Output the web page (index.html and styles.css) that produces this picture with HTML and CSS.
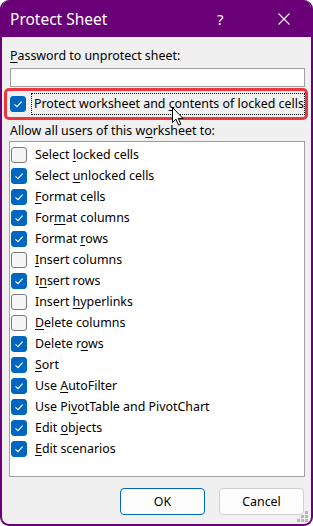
FILE: index.html
```html
<!DOCTYPE html>
<html>
<head>
<meta charset="utf-8">
<link rel="stylesheet" href="styles.css">
</head>
<body>
<div class="window">
  <div class="titlebar">
    <span class="title">Protect Sheet</span>
    <span class="help">?</span>
    <svg class="close" width="12" height="12" viewBox="0 0 12 12"><path d="M0.5 0.5 L11.5 11.5 M11.5 0.5 L0.5 11.5" stroke="#fff" stroke-width="1.1" fill="none"/></svg>
  </div>
  <div class="content">
    <div class="label pw"><u>P</u>assword to unprotect sheet:</div>
    <div class="input"></div>
    <div class="highlight">
      <span class="cb on"><svg width="16" height="16" viewBox="0 0 16 16"><path d="M4.5 8.3 L7 10.6 L11.6 5.6" stroke="#fff" stroke-width="1.1" fill="none"/></svg></span>
      <span class="focus">Protect worksheet and <u>c</u>ontents of locked cells</span>
    </div>
    <div class="label allow">Allow all users of this w<u>o</u>rksheet to:</div>
    <div class="list">
      <div class="item"><span class="cb"></span><span class="txt">Select <u>l</u>ocked cells</span></div>
      <div class="item"><span class="cb on"><svg width="16" height="16" viewBox="0 0 16 16"><path d="M4.5 8.3 L7 10.6 L11.6 5.6" stroke="#fff" stroke-width="1.1" fill="none"/></svg></span><span class="txt">Select <u>u</u>nlocked cells</span></div>
      <div class="item"><span class="cb on"><svg width="16" height="16" viewBox="0 0 16 16"><path d="M4.5 8.3 L7 10.6 L11.6 5.6" stroke="#fff" stroke-width="1.1" fill="none"/></svg></span><span class="txt"><u>F</u>ormat cells</span></div>
      <div class="item"><span class="cb on"><svg width="16" height="16" viewBox="0 0 16 16"><path d="M4.5 8.3 L7 10.6 L11.6 5.6" stroke="#fff" stroke-width="1.1" fill="none"/></svg></span><span class="txt">For<u>m</u>at columns</span></div>
      <div class="item"><span class="cb on"><svg width="16" height="16" viewBox="0 0 16 16"><path d="M4.5 8.3 L7 10.6 L11.6 5.6" stroke="#fff" stroke-width="1.1" fill="none"/></svg></span><span class="txt">Format <u>r</u>ows</span></div>
      <div class="item"><span class="cb"></span><span class="txt"><u>I</u>nsert columns</span></div>
      <div class="item"><span class="cb on"><svg width="16" height="16" viewBox="0 0 16 16"><path d="M4.5 8.3 L7 10.6 L11.6 5.6" stroke="#fff" stroke-width="1.1" fill="none"/></svg></span><span class="txt">I<u>n</u>sert rows</span></div>
      <div class="item"><span class="cb"></span><span class="txt">Insert <u>h</u>yperlinks</span></div>
      <div class="item"><span class="cb"></span><span class="txt"><u>D</u>elete columns</span></div>
      <div class="item"><span class="cb on"><svg width="16" height="16" viewBox="0 0 16 16"><path d="M4.5 8.3 L7 10.6 L11.6 5.6" stroke="#fff" stroke-width="1.1" fill="none"/></svg></span><span class="txt">Delete r<u>o</u>ws</span></div>
      <div class="item"><span class="cb on"><svg width="16" height="16" viewBox="0 0 16 16"><path d="M4.5 8.3 L7 10.6 L11.6 5.6" stroke="#fff" stroke-width="1.1" fill="none"/></svg></span><span class="txt"><u>S</u>ort</span></div>
      <div class="item"><span class="cb on"><svg width="16" height="16" viewBox="0 0 16 16"><path d="M4.5 8.3 L7 10.6 L11.6 5.6" stroke="#fff" stroke-width="1.1" fill="none"/></svg></span><span class="txt">Use <u>A</u>utoFilter</span></div>
      <div class="item"><span class="cb on"><svg width="16" height="16" viewBox="0 0 16 16"><path d="M4.5 8.3 L7 10.6 L11.6 5.6" stroke="#fff" stroke-width="1.1" fill="none"/></svg></span><span class="txt">Use Pi<u>v</u>otTable and PivotChart</span></div>
      <div class="item"><span class="cb on"><svg width="16" height="16" viewBox="0 0 16 16"><path d="M4.5 8.3 L7 10.6 L11.6 5.6" stroke="#fff" stroke-width="1.1" fill="none"/></svg></span><span class="txt">Edit <u>o</u>bjects</span></div>
      <div class="item"><span class="cb on"><svg width="16" height="16" viewBox="0 0 16 16"><path d="M4.5 8.3 L7 10.6 L11.6 5.6" stroke="#fff" stroke-width="1.1" fill="none"/></svg></span><span class="txt"><u>E</u>dit scenarios</span></div>
    </div>
    <div class="buttons">
      <div class="btn ok">OK</div>
      <div class="btn">Cancel</div>
    </div>
  </div>
  <svg class="grip" width="12" height="12" viewBox="0 0 12 12" fill="#b8b8b8">
    <rect x="8" y="0" width="3" height="3"/>
    <rect x="4" y="4" width="3" height="3"/><rect x="8" y="4" width="3" height="3"/>
    <rect x="0" y="8" width="3" height="3"/><rect x="4" y="8" width="3" height="3"/><rect x="8" y="8" width="3" height="3"/>
  </svg>
  <svg class="cursor" width="12" height="20" viewBox="0 0 12 20">
    <path d="M0.5 0.5 L0.5 15.5 L4 12.2 L6.6 18.2 L8.8 17.2 L6.3 11.4 L11 11.4 Z" fill="#fff" stroke="#000" stroke-width="1"/>
  </svg>
</div>
</body>
</html>
```

FILE: styles.css
```css
html, body {
  margin: 0;
  padding: 0;
  background: #ffffff;
}
.window {
  position: relative;
  width: 313px;
  height: 526px;
  box-sizing: border-box;
  border: 2px solid #690078;
  border-top: none;
  border-radius: 9px;
  background: #f0f0f0;
  overflow: hidden;
  font-family: "Noto Sans", sans-serif;
  font-size: 12.4px;
  color: #000;
  display: flex;
  flex-direction: column;
}
.titlebar {
  height: 37px;
  background: #690078;
  color: #fff;
  display: flex;
  align-items: center;
  margin: 0 -2px;
  padding-left: 10px;
  flex: none;
}
.title {
  font-size: 15.5px;
  flex: 1;
}
.help {
  font-size: 15px;
  width: 12px;
  margin-right: 49px;
}
.close {
  margin-right: 23px;
}
.content {
  display: flex;
  flex-direction: column;
  padding: 0 0 0 1px;
  flex: 1;
}
.label {
  line-height: 18px;
  padding-left: 7px;
  white-space: nowrap;
}
.pw {
  margin-top: 10px;
}
.input {
  margin: 3px 6px 0 7px;
  height: 17px;
  background: #fff;
  border: 1px solid #a0a0a0;
}
.highlight {
  margin: 1px 3px 0 1px;
  height: 26px;
  border: 3px solid #e8383d;
  border-radius: 5px;
  display: flex;
  align-items: center;
  padding-left: 3px;
}
.focus {
  margin-left: 6px;
  outline: 1px dotted #000;
  line-height: 20px;
  padding: 0 0 0 2px;
  flex: 1;
  margin-right: 1px;
  white-space: nowrap;
}
.allow {
  margin-top: 2px;
}
.list {
  margin: 1px 6px 0 6px;
  height: 336px;
  box-sizing: border-box;
  border: 1px solid #a0a0a0;
  background: #fff;
  padding-top: 2px;
  padding-left: 1px;
}
.item {
  height: 21px;
  display: flex;
  align-items: center;
}
.txt {
  white-space: nowrap;
}
.cb {
  width: 16px;
  height: 16px;
  box-sizing: border-box;
  border: 1px solid #7a7a7a;
  border-radius: 3px;
  background: #f5f5f5;
  margin-right: 8px;
  display: inline-flex;
  flex: none;
}
.cb.on {
  background: #0067c0;
  border-color: #0067c0;
}
.cb.on svg {
  margin: -1px;
}
.highlight .cb {
  margin-right: 0;
}
u {
  text-decoration-thickness: 1px;
  text-underline-offset: 2px;
}
.buttons {
  display: flex;
  justify-content: flex-end;
  gap: 14px;
  margin-top: 11px;
  padding-right: 7px;
}
.btn {
  width: 85px;
  height: 27px;
  box-sizing: border-box;
  border: 1px solid #d0d0d0;
  border-radius: 4px;
  background: #fdfdfd;
  display: flex;
  align-items: center;
  justify-content: center;
}
.btn.ok {
  border-color: #0067c0;
}
.grip {
  position: absolute;
  right: 2px;
  bottom: 1px;
}
.cursor {
  position: absolute;
  left: 170px;
  top: 107px;
}
```
